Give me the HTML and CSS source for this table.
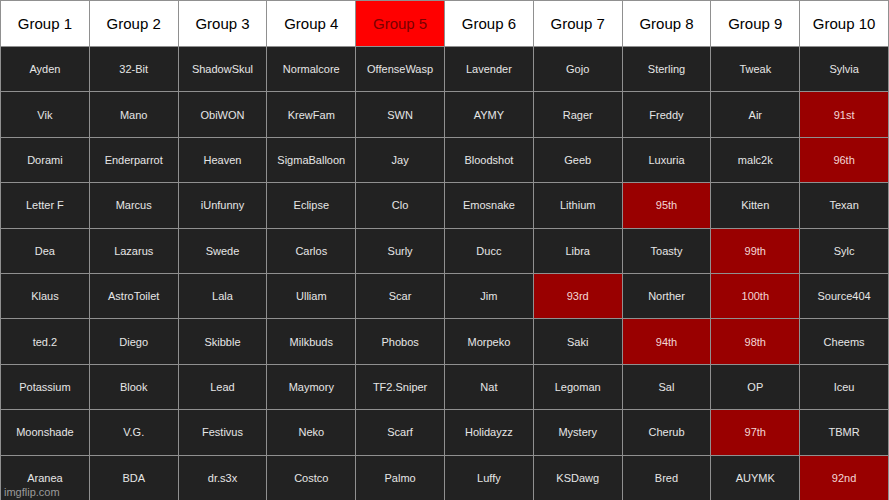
FILE: index.html
```html
<!DOCTYPE html>
<html>
<head>
<meta charset="utf-8">
<link rel="stylesheet" href="styles.css">
</head>
<body>
<div class="board">
  <div class="head">Group 1</div><div class="head">Group 2</div><div class="head">Group 3</div><div class="head">Group 4</div><div class="head hot">Group 5</div><div class="head">Group 6</div><div class="head">Group 7</div><div class="head">Group 8</div><div class="head">Group 9</div><div class="head">Group 10</div>

  <div class="c">Ayden</div><div class="c">32-Bit</div><div class="c">ShadowSkul</div><div class="c">Normalcore</div><div class="c">OffenseWasp</div><div class="c">Lavender</div><div class="c">Gojo</div><div class="c">Sterling</div><div class="c">Tweak</div><div class="c">Sylvia</div>

  <div class="c">Vik</div><div class="c">Mano</div><div class="c">ObiWON</div><div class="c">KrewFam</div><div class="c">SWN</div><div class="c">AYMY</div><div class="c">Rager</div><div class="c">Freddy</div><div class="c">Air</div><div class="c out">91st</div>

  <div class="c">Dorami</div><div class="c">Enderparrot</div><div class="c">Heaven</div><div class="c">SigmaBalloon</div><div class="c">Jay</div><div class="c">Bloodshot</div><div class="c">Geeb</div><div class="c">Luxuria</div><div class="c">malc2k</div><div class="c out">96th</div>

  <div class="c">Letter F</div><div class="c">Marcus</div><div class="c">iUnfunny</div><div class="c">Eclipse</div><div class="c">Clo</div><div class="c">Emosnake</div><div class="c">Lithium</div><div class="c out">95th</div><div class="c">Kitten</div><div class="c">Texan</div>

  <div class="c">Dea</div><div class="c">Lazarus</div><div class="c">Swede</div><div class="c">Carlos</div><div class="c">Surly</div><div class="c">Ducc</div><div class="c">Libra</div><div class="c">Toasty</div><div class="c out">99th</div><div class="c">Sylc</div>

  <div class="c">Klaus</div><div class="c">AstroToilet</div><div class="c">Lala</div><div class="c">Ulliam</div><div class="c">Scar</div><div class="c">Jim</div><div class="c out">93rd</div><div class="c">Norther</div><div class="c out">100th</div><div class="c">Source404</div>

  <div class="c">ted.2</div><div class="c">Diego</div><div class="c">Skibble</div><div class="c">Milkbuds</div><div class="c">Phobos</div><div class="c">Morpeko</div><div class="c">Saki</div><div class="c out">94th</div><div class="c out">98th</div><div class="c">Cheems</div>

  <div class="c">Potassium</div><div class="c">Blook</div><div class="c">Lead</div><div class="c">Maymory</div><div class="c">TF2.Sniper</div><div class="c">Nat</div><div class="c">Legoman</div><div class="c">Sal</div><div class="c">OP</div><div class="c">Iceu</div>

  <div class="c">Moonshade</div><div class="c">V.G.</div><div class="c">Festivus</div><div class="c">Neko</div><div class="c">Scarf</div><div class="c">Holidayzz</div><div class="c">Mystery</div><div class="c">Cherub</div><div class="c out">97th</div><div class="c">TBMR</div>

  <div class="c">Aranea</div><div class="c">BDA</div><div class="c">dr.s3x</div><div class="c">Costco</div><div class="c">Palmo</div><div class="c">Luffy</div><div class="c">KSDawg</div><div class="c">Bred</div><div class="c">AUYMK</div><div class="c out">92nd</div>
</div>
<div class="mark">imgflip.com</div>
</body>
</html>
```
FILE: styles.css
```css
html, body {
  margin: 0;
  padding: 0;
  background: #222222;
}
body {
  width: 889px;
  height: 500px;
  position: relative;
  overflow: hidden;
  font-family: "Liberation Sans", Arial, sans-serif;
}
.board {
  width: 889px;
  height: 500px;
  box-sizing: border-box;
  display: grid;
  grid-template-columns: repeat(10, 1fr);
  grid-template-rows: 45px repeat(10, 1fr);
  gap: 1px;
  padding: 1px 1px 0 1px;
  background: #909090;
}
.head {
  background: #ffffff;
  color: #000000;
  font-size: 15px;
  display: flex;
  align-items: center;
  justify-content: center;
}
.head.hot {
  background: #ff0000;
  color: #7a0000;
}
.c {
  background: #222222;
  color: #e6e6e6;
  font-size: 11px;
  display: flex;
  align-items: center;
  justify-content: center;
  white-space: nowrap;
}
.c.out {
  background: #990000;
  color: #f3d6d6;
}
.mark {
  position: absolute;
  left: 4px;
  bottom: 2px;
  font-size: 11px;
  color: #9a9a9a;
}
```
